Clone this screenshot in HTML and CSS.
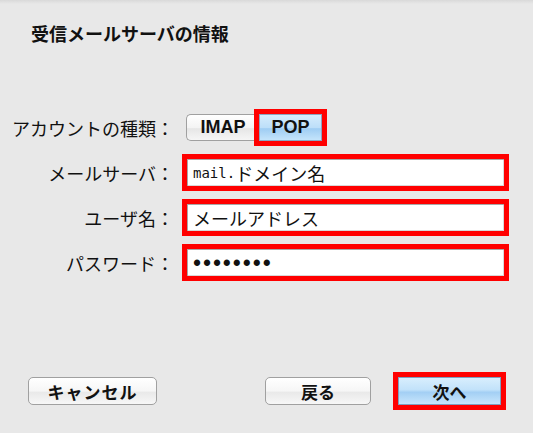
FILE: index.html
```html
<!DOCTYPE html>
<html lang="ja">
<head>
    <meta charset="UTF-8">
    <meta name="viewport" content="width=device-width, initial-scale=1.0">
    <title>受信メールサーバの情報</title>
    <link rel="stylesheet" href="styles.css">
</head>
<body>
    <div class="sheet">
        <h1 class="title">受信メールサーバの情報</h1>

        <!-- Account settings -->
        <div class="form">
            <div class="label">アカウントの種類：</div>
            <div class="control">
                <div class="segmented">
                    <span class="seg">IMAP</span>
                    <span class="seg selected marked">POP</span>
                </div>
            </div>

            <div class="label">メールサーバ：</div>
            <div class="field"><span class="mono">mail.</span>ドメイン名</div>

            <div class="label">ユーザ名：</div>
            <div class="field">メールアドレス</div>

            <div class="label">パスワード：</div>
            <div class="field password">••••••••</div>
        </div>

        <!-- Dialog buttons -->
        <div class="footer">
            <button class="btn cancel">キャンセル</button>
            <button class="btn back">戻る</button>
            <button class="btn primary marked">次へ</button>
        </div>
    </div>
</body>
</html>
```

FILE: styles.css
```css
* {
    margin: 0;
    padding: 0;
    box-sizing: border-box;
}

body {
    width: 533px;
    height: 433px;
    overflow: hidden;
    background: linear-gradient(#d9d9d9, #e8e8e8 4px) #e8e8e8;
    color: #111;
    font-family: "Noto Sans CJK JP", "Noto Sans", sans-serif;
    font-size: 18px;
}

.sheet {
    display: flex;
    flex-direction: column;
}

.title {
    font-size: 18px;
    font-weight: bold;
    line-height: 22px;
    padding: 22px 0 0 31px;
}

.form {
    display: grid;
    grid-template-columns: 174px 327px;
    grid-auto-rows: 37px;
    column-gap: 8px;
    row-gap: 8px;
    margin-top: 65px;
    align-items: center;
}

.label {
    text-align: right;
    line-height: 22px;
}

.control {
    display: flex;
    align-items: center;
    height: 100%;
}

/* segmented IMAP / POP switch */
.segmented {
    display: flex;
    height: 27px;
    margin-left: 4px;
}

.seg {
    display: flex;
    align-items: center;
    justify-content: center;
    font-family: "Liberation Sans", Arial, sans-serif;
    font-weight: bold;
    font-size: 18px;
    border: 1px solid #a0a0a0;
    background: linear-gradient(#ffffff, #f4f4f4 50%, #e6e6e6 55%, #f6f6f6);
}

.seg:first-child {
    width: 73px;
    border-radius: 5px 0 0 5px;
    border-right: none;
}

.seg.selected {
    width: 63px;
    border-color: #8aa6c2;
    background: linear-gradient(#d6ecfc, #bddff9 50%, #9fcdf3 55%, #c4e4fb);
}

/* red highlight frames */
.marked {
    outline: 5px solid #ff0000;
}

.field {
    height: 37px;
    border: 5px solid #ff0000;
    background: #fff;
    box-shadow: inset 1px 1px 0 #a8a8a8, inset -1px -1px 0 #d8d8d8;
    display: flex;
    align-items: center;
    padding-left: 6px;
    line-height: 22px;
}

.mono {
    font-family: "DejaVu Sans Mono", "Liberation Mono", monospace;
    font-size: 14px;
}

.password {
    font-family: "Liberation Sans", Arial, sans-serif;
    font-size: 23px;
    letter-spacing: 1.9px;
}

.footer {
    display: flex;
    align-items: center;
    margin-top: 96px;
    padding: 0 32px 0 28px;
}

.btn {
    height: 28px;
    border: 1px solid #a0a0a0;
    border-radius: 5px;
    font-family: "Noto Sans CJK JP", sans-serif;
    font-size: 17px;
    font-weight: bold;
    color: #111;
    background: linear-gradient(#ffffff, #f6f6f6 50%, #e9e9e9 55%, #f7f7f7);
}

.cancel {
    width: 129px;
    letter-spacing: 1px;
}

.back {
    width: 106px;
    margin-left: auto;
}

.primary {
    width: 103px;
    margin-left: 27px;
    border-radius: 0;
    border-color: #7f9fbf;
    background: linear-gradient(#d8eefd, #c2e2fa 45%, #a3cff4 55%, #c8e6fc);
}
```
